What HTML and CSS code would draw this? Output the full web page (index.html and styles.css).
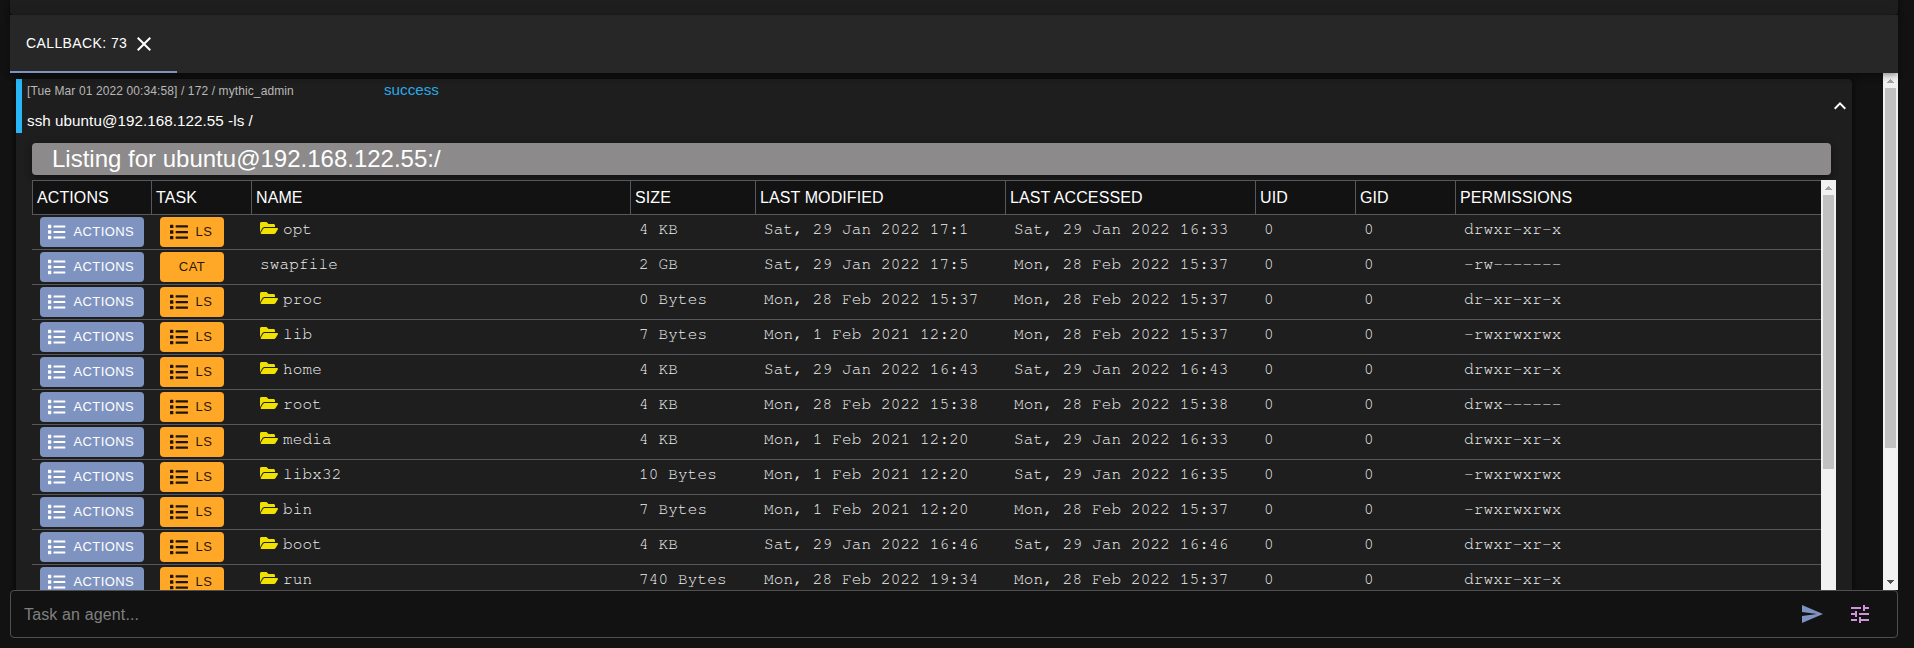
FILE: index.html
```
<!DOCTYPE html>
<html lang="en">
<head>
<meta charset="utf-8">
<title>Callback 73</title>
<link rel="stylesheet" href="styles.css">
</head>
<body>
<svg class="defs" width="0" height="0">
  <symbol id="list" viewBox="0 0 512 512"><path d="M80 368H16a16 16 0 0 0-16 16v64a16 16 0 0 0 16 16h64a16 16 0 0 0 16-16v-64a16 16 0 0 0-16-16zm0-320H16A16 16 0 0 0 0 64v64a16 16 0 0 0 16 16h64a16 16 0 0 0 16-16V64a16 16 0 0 0-16-16zm0 160H16a16 16 0 0 0-16 16v64a16 16 0 0 0 16 16h64a16 16 0 0 0 16-16v-64a16 16 0 0 0-16-16zm416 176H176a16 16 0 0 0-16 16v32a16 16 0 0 0 16 16h320a16 16 0 0 0 16-16v-32a16 16 0 0 0-16-16zm0-320H176a16 16 0 0 0-16 16v32a16 16 0 0 0 16 16h320a16 16 0 0 0 16-16V80a16 16 0 0 0-16-16zm0 160H176a16 16 0 0 0-16 16v32a16 16 0 0 0 16 16h320a16 16 0 0 0 16-16v-32a16 16 0 0 0-16-16z"/></symbol>
  <symbol id="folder" viewBox="0 0 576 512"><path d="M572.694 292.093L500.27 416.248A63.997 63.997 0 0 1 444.989 448H45.025c-18.523 0-30.064-20.093-20.731-36.093l72.424-124.155A64 64 0 0 1 152 256h399.964c18.523 0 30.064 20.093 20.73 36.093zM152 224h328v-48c0-26.51-21.49-48-48-48H272l-64-64H48C21.49 64 0 85.49 0 112v278.046l69.077-118.418C86.214 242.25 117.989 224 152 224z"/></symbol>
</svg>
<div class="app">
  <div class="upper-pane"></div>
  <div class="tabs">
    <div class="tab"><span>CALLBACK: 73</span><svg class="icon" viewBox="0 0 24 24"><path d="M19 6.41 17.59 5 12 10.59 6.41 5 5 6.41 10.59 12 5 17.59 6.41 19 12 13.41 17.59 19 19 17.59 13.41 12z"/></svg></div>
  </div>
  <div class="output">
    <div class="task">
      <div class="summary">
        <div class="summary-text">
          <div class="meta"><span class="stamp">[Tue Mar 01 2022 00:34:58] / 172 / mythic_admin</span><span class="status">success</span></div>
          <div class="command">ssh ubuntu@192.168.122.55 -ls /</div>
        </div>
        <svg class="icon" viewBox="0 0 24 24"><path d="m12 8-6 6 1.41 1.41L12 10.83l4.59 4.58L18 14z"/></svg>
      </div>
      <div class="banner">Listing for ubuntu@192.168.122.55:/</div>
      <div class="listing">
        <div class="grid">
          <div class="row head"><div>ACTIONS</div><div>TASK</div><div>NAME</div><div>SIZE</div><div>LAST MODIFIED</div><div>LAST ACCESSED</div><div>UID</div><div>GID</div><div>PERMISSIONS</div></div>
          <div class="row"><div><button class="btn blue"><svg><use href="#list"/></svg>ACTIONS</button></div><div><button class="btn orange"><svg><use href="#list"/></svg>LS</button></div><div><svg class="folder"><use href="#folder"/></svg>opt</div><div>4 KB</div><div>Sat, 29 Jan 2022 17:1</div><div>Sat, 29 Jan 2022 16:33</div><div>0</div><div>0</div><div>drwxr-xr-x</div></div>
          <div class="row"><div><button class="btn blue"><svg><use href="#list"/></svg>ACTIONS</button></div><div><button class="btn orange">CAT</button></div><div>swapfile</div><div>2 GB</div><div>Sat, 29 Jan 2022 17:5</div><div>Mon, 28 Feb 2022 15:37</div><div>0</div><div>0</div><div>-rw-------</div></div>
          <div class="row"><div><button class="btn blue"><svg><use href="#list"/></svg>ACTIONS</button></div><div><button class="btn orange"><svg><use href="#list"/></svg>LS</button></div><div><svg class="folder"><use href="#folder"/></svg>proc</div><div>0 Bytes</div><div>Mon, 28 Feb 2022 15:37</div><div>Mon, 28 Feb 2022 15:37</div><div>0</div><div>0</div><div>dr-xr-xr-x</div></div>
          <div class="row"><div><button class="btn blue"><svg><use href="#list"/></svg>ACTIONS</button></div><div><button class="btn orange"><svg><use href="#list"/></svg>LS</button></div><div><svg class="folder"><use href="#folder"/></svg>lib</div><div>7 Bytes</div><div>Mon, 1 Feb 2021 12:20</div><div>Mon, 28 Feb 2022 15:37</div><div>0</div><div>0</div><div>-rwxrwxrwx</div></div>
          <div class="row"><div><button class="btn blue"><svg><use href="#list"/></svg>ACTIONS</button></div><div><button class="btn orange"><svg><use href="#list"/></svg>LS</button></div><div><svg class="folder"><use href="#folder"/></svg>home</div><div>4 KB</div><div>Sat, 29 Jan 2022 16:43</div><div>Sat, 29 Jan 2022 16:43</div><div>0</div><div>0</div><div>drwxr-xr-x</div></div>
          <div class="row"><div><button class="btn blue"><svg><use href="#list"/></svg>ACTIONS</button></div><div><button class="btn orange"><svg><use href="#list"/></svg>LS</button></div><div><svg class="folder"><use href="#folder"/></svg>root</div><div>4 KB</div><div>Mon, 28 Feb 2022 15:38</div><div>Mon, 28 Feb 2022 15:38</div><div>0</div><div>0</div><div>drwx------</div></div>
          <div class="row"><div><button class="btn blue"><svg><use href="#list"/></svg>ACTIONS</button></div><div><button class="btn orange"><svg><use href="#list"/></svg>LS</button></div><div><svg class="folder"><use href="#folder"/></svg>media</div><div>4 KB</div><div>Mon, 1 Feb 2021 12:20</div><div>Sat, 29 Jan 2022 16:33</div><div>0</div><div>0</div><div>drwxr-xr-x</div></div>
          <div class="row"><div><button class="btn blue"><svg><use href="#list"/></svg>ACTIONS</button></div><div><button class="btn orange"><svg><use href="#list"/></svg>LS</button></div><div><svg class="folder"><use href="#folder"/></svg>libx32</div><div>10 Bytes</div><div>Mon, 1 Feb 2021 12:20</div><div>Sat, 29 Jan 2022 16:35</div><div>0</div><div>0</div><div>-rwxrwxrwx</div></div>
          <div class="row"><div><button class="btn blue"><svg><use href="#list"/></svg>ACTIONS</button></div><div><button class="btn orange"><svg><use href="#list"/></svg>LS</button></div><div><svg class="folder"><use href="#folder"/></svg>bin</div><div>7 Bytes</div><div>Mon, 1 Feb 2021 12:20</div><div>Mon, 28 Feb 2022 15:37</div><div>0</div><div>0</div><div>-rwxrwxrwx</div></div>
          <div class="row"><div><button class="btn blue"><svg><use href="#list"/></svg>ACTIONS</button></div><div><button class="btn orange"><svg><use href="#list"/></svg>LS</button></div><div><svg class="folder"><use href="#folder"/></svg>boot</div><div>4 KB</div><div>Sat, 29 Jan 2022 16:46</div><div>Sat, 29 Jan 2022 16:46</div><div>0</div><div>0</div><div>drwxr-xr-x</div></div>
          <div class="row"><div><button class="btn blue"><svg><use href="#list"/></svg>ACTIONS</button></div><div><button class="btn orange"><svg><use href="#list"/></svg>LS</button></div><div><svg class="folder"><use href="#folder"/></svg>run</div><div>740 Bytes</div><div>Mon, 28 Feb 2022 19:34</div><div>Mon, 28 Feb 2022 15:37</div><div>0</div><div>0</div><div>drwxr-xr-x</div></div>
        </div>
        <div class="scrollbar"><svg class="arrow up" viewBox="0 0 15 15" shape-rendering="crispEdges"><path d="M7 6h1v1h1v1h1v1h1v1H4V9h1V8h1V7h1z"/></svg><div class="thumb inner"></div></div>
      </div>
    </div>
    <div class="scrollbar"><svg class="arrow up" viewBox="0 0 15 15" shape-rendering="crispEdges"><path d="M7 6h1v1h1v1h1v1h1v1H4V9h1V8h1V7h1z"/></svg><div class="thumb outer"></div><svg class="arrow down" viewBox="0 0 15 15" shape-rendering="crispEdges"><path d="M4 5h7v1h-1v1H9v1H8v1H7V8H6V7H5V6H4z"/></svg></div>
  </div>
  <div class="prompt">
    <span class="placeholder">Task an agent...</span>
    <svg class="icon send" viewBox="0 0 24 24"><path d="M2.01 21 23 12 2.01 3 2 10l15 2-15 2z"/></svg>
    <svg class="icon tune" viewBox="0 0 24 24"><path d="M3 17v2h6v-2H3zM3 5v2h10V5H3zm10 16v-2h8v-2h-8v-2h-2v6h2zM7 9v2H3v2h4v2h2V9H7zm14 4v-2H11v2h10zm-6-4h2V7h4V5h-4V3h-2v6z"/></svg>
  </div>
</div>
</body>
</html>
```
FILE: styles.css
```
* { box-sizing: border-box; }
body {
  margin: 0;
  height: 648px;
  overflow: hidden;
  background: #121212;
  color: #fff;
  font-family: "Liberation Sans", Arial, sans-serif;
}
.defs { position: absolute; }
.app {
  display: flex;
  flex-direction: column;
  width: 1888px;
  height: 638px;
  margin-left: 10px;
}
.icon { width: 24px; height: 24px; fill: currentColor; flex: none; }

.upper-pane {
  height: 15px;
  flex: none;
  background: #1e1e1e;
  border-radius: 0 0 4px 4px;
  box-shadow: 0 1px 5px rgba(0, 0, 0, .6);
}
.tabs {
  position: relative;
  z-index: 1;
  height: 58px;
  flex: none;
  display: flex;
  background: #272727;
  box-shadow: 0 2px 4px -1px rgba(0, 0, 0, .2), 0 4px 5px rgba(0, 0, 0, .14), 0 1px 10px rgba(0, 0, 0, .12);
}
.tab {
  width: 167px;
  display: flex;
  align-items: center;
  gap: 5px;
  padding: 0 0 0 16px;
  border-bottom: 2px solid #7f93c0;
  font-size: 14px;
  letter-spacing: .4px;
  white-space: nowrap;
}
.tab .icon { margin-top: 2px; }

.output {
  height: 517px;
  flex: none;
  display: flex;
  justify-content: space-between;
  overflow: hidden;
}
.task {
  width: 1836px;
  height: 620px;
  margin: 6px 0 0 6px;
  background: #1e1e1e;
  border-radius: 4px;
  box-shadow: 0 3px 3px -2px rgba(0, 0, 0, .2), 0 3px 4px rgba(0, 0, 0, .14), 0 1px 8px rgba(0, 0, 0, .5);
}
.summary {
  height: 54px;
  display: flex;
  align-items: center;
  justify-content: space-between;
  border-left: 6px solid #29b6f6;
}
.summary-text { padding-left: 5px; height: 54px; }
.meta { display: flex; height: 24px; }
.stamp { width: 357px; font-size: 12px; line-height: 25px; letter-spacing: .11px; color: #b8b8b8; }
.status { font-size: 15.2px; line-height: 22px; color: #29a9e6; }
.command { font-size: 15.2px; line-height: 36px; letter-spacing: .06px; }

.banner {
  width: 1799px;
  height: 32px;
  margin: 10px 0 0 16px;
  padding-left: 20px;
  font-size: 24px;
  line-height: 32px;
  background: #8c8a8a;
  border-radius: 4px;
  box-shadow: 0 3px 5px -1px rgba(0, 0, 0, .2), 0 5px 8px rgba(0, 0, 0, .14), 0 1px 10px rgba(0, 0, 0, .12);
}
.listing {
  width: 1804px;
  height: 440px;
  margin: 5px 0 0 16px;
  display: flex;
}
.grid { width: 1789px; }
.row {
  display: grid;
  grid-template-columns: 120px 100px 379px 125px 250px 250px 100px 100px 365px;
  height: 35px;
  border-bottom: 1px solid #55585c;
  color: #f0f0f0;
  font-family: "FreeMono", "Nimbus Mono PS", "Liberation Mono", "Courier New", monospace;
  font-size: 16px;
  letter-spacing: .15px;
  line-height: 28px;
}
.row > div { padding-left: 8px; white-space: nowrap; }
.head {
  background: #121212;
  border-top: 1px solid #55585c;
  color: #fff;
  font-family: "Liberation Sans", Arial, sans-serif;
  letter-spacing: .1px;
  line-height: 33px;
}
.head > div { padding-left: 4px; border-right: 1px solid #55585c; }
.head > div:first-child { border-left: 1px solid #55585c; }
.head > div:last-child { border-right: 0; }
.btn {
  display: flex;
  align-items: center;
  justify-content: center;
  min-width: 64px;
  height: 30px;
  margin-top: 2px;
  padding: 0 10px;
  border: 0;
  border-radius: 4px;
  font: 13px/22px "Liberation Sans", Arial, sans-serif;
  letter-spacing: .46px;
}
.btn svg { width: 18px; height: 18px; margin: 0 8px 0 -2px; fill: currentColor; }
.blue { width: 104px; letter-spacing: .38px; background: #7f93c0; color: #fff; }
.orange { background: #ffa726; color: rgba(0, 0, 0, .87); }
.folder { width: 18px; height: 16px; margin-right: 5px; fill: #f1e100; vertical-align: -2px; }

.scrollbar {
  width: 15px;
  flex: none;
  display: flex;
  flex-direction: column;
  align-items: center;
  background: #f1f1f1;
}
.arrow { width: 15px; height: 15px; flex: none; }
.up { fill: #a3a3a3; }
.down { margin-top: auto; fill: #505050; }
.thumb { width: 11px; background: #c1c1c1; }
.inner { height: 274px; }
.outer { height: 360px; }

.prompt {
  height: 48px;
  flex: none;
  display: flex;
  align-items: center;
  border: 1px solid #4f4f4f;
  border-radius: 4px;
  padding: 0 25px 0 13px;
}
.placeholder { flex: 1; padding-top: 2px; font-size: 16px; letter-spacing: .14px; color: #808080; }
.send { color: #7f93c0; margin-right: 24px; }
.tune { color: #ce93d8; }
```
